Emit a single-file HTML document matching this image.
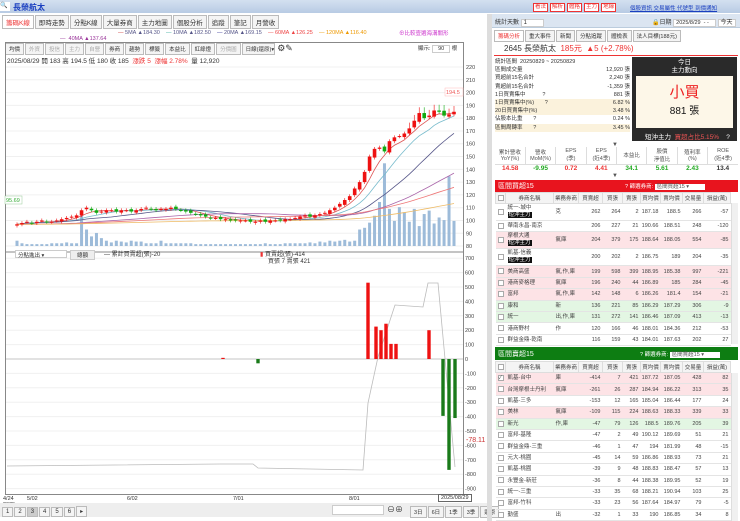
<!DOCTYPE html>
<html><head><meta charset="utf-8">
<style>
*{box-sizing:border-box;margin:0;padding:0}
body{width:740px;height:521px;overflow:hidden;background:#fff;font-family:"Liberation Sans","Noto Sans CJK TC",sans-serif;font-size:7px;color:#333;position:relative}
.a{position:absolute}
.hdr{left:0;top:0;width:740px;height:13px;background:linear-gradient(#d3e0f0,#b8cbe4)}
.tab{display:inline-block;border:1px solid #bbb;background:#f4f4f4;padding:1px 3px;margin-right:1px;font-size:6.5px}
.rb{display:inline-block;border:1px solid #e33;color:#e33;background:#fff;padding:0 1px;font-size:5.5px;line-height:7px;margin-right:2px}
table{border-collapse:collapse;table-layout:fixed}
.t td{height:11.4px;border-bottom:1px solid #e4e4e4;font-size:5.5px;text-align:right;padding-right:2px;color:#444;white-space:nowrap;overflow:hidden;line-height:6px}
.t td.n{text-align:left;padding-left:2px}
.t th{font-weight:normal;font-size:5.5px;background:#f4f4f4;border:1px solid #ddd;height:11px;color:#444;white-space:nowrap;overflow:hidden}
.cb{display:inline-block;width:6px;height:6px;border:1px solid #aaa;background:#fff;vertical-align:middle}
.pk td{background:#fde3e6}.gr td{background:#e3f6e3}
.blk{background:#111;color:#fff;padding:0 1px}
.red{color:#e33}.grn{color:#2a2}
</style></head><body>
<div class="a hdr"></div>
<div class="a" style="left:0;top:2px;width:10px;height:9px;background:#fff;font-size:6px">🔍</div>
<div class="a" style="left:13px;top:2px;color:#1a3fc0;font-weight:bold;font-size:8px">長榮航太</div>
<div class="a" style="left:533px;top:3px;white-space:nowrap"><span class="rb">看法</span><span class="rb">解析</span><span class="rb">體格</span><span class="rb">主力</span><span class="rb">地緣</span></div>
<div class="a" style="left:630px;top:4px;color:#1a3fc0;text-decoration:underline;font-size:5.5px;white-space:nowrap">個股資訊 交易屬性 代號型 到價通知</div>

<div class="a" style="left:2px;top:15px;white-space:nowrap"><span class="tab" style="color:#e33;background:#fff">籌碼K線</span><span class="tab">即時走勢</span><span class="tab">分點K線</span><span class="tab">大量券商</span><span class="tab">主力地圖</span><span class="tab">個股分析</span><span class="tab">追蹤</span><span class="tab">筆記</span><span class="tab">月營收</span></div>
<div class="a" style="left:118px;top:30px;font-size:5.5px;white-space:nowrap;color:#558"><span style="color:#c33">—</span> 5MA ▲184.30 &nbsp;&nbsp;&nbsp;<span style="color:#3a9">—</span> 10MA ▲182.50 &nbsp;&nbsp;&nbsp;<span style="color:#339">—</span> 20MA ▲169.15 &nbsp;&nbsp;&nbsp;<span style="color:#e44">— 60MA ▲126.25</span> &nbsp;&nbsp;&nbsp;<span style="color:#e90">— 120MA ▲116.40</span></div>
<div class="a" style="left:60px;top:36px;font-size:5.5px;color:#939">— &nbsp;40MA ▲137.64</div>
<div class="a" style="left:399px;top:29px;font-size:5.5px;color:#c3c">⊕比較壹選海溝關形</div>
<div class="a" style="left:5px;top:43px;white-space:nowrap;font-size:5.5px"><span class="tab" style="font-size:5.5px">均價</span><span class="tab" style="font-size:5.5px;color:#aaa">外資</span><span class="tab" style="font-size:5.5px;color:#aaa">投信</span><span class="tab" style="font-size:5.5px;color:#aaa">主力</span><span class="tab" style="font-size:5.5px;color:#aaa">自營</span><span class="tab" style="font-size:5.5px">券商</span><span class="tab" style="font-size:5.5px">趨勢</span><span class="tab" style="font-size:5.5px">標籤</span><span class="tab" style="font-size:5.5px">本益比</span><span class="tab" style="font-size:5.5px">紅綠燈</span><span class="tab" style="font-size:5.5px;color:#aaa">分價圖</span><span class="tab" style="font-size:5.5px;width:33px">日線(還原)▾</span> <span style="font-size:9px">⚙✎</span></div>
<div class="a" style="left:7px;top:55px;font-size:6.5px;white-space:nowrap">2025/08/29 開 183 高 194.5 低 180 收 185 &nbsp;<span class="red">漲跌 5 &nbsp;漲幅 2.78%</span> &nbsp;量 12,920</div>
<div class="a" style="left:418px;top:44px;font-size:5.5px">顯示: <span style="border:1px solid #ccc;padding:0 5px">90</span> 根</div>

<svg class="a" style="left:0;top:0" width="492" height="521" id="ch">
<rect x="5.5" y="42.5" width="458" height="452" fill="none" stroke="#888"/>
<line x1="5" y1="252" x2="463" y2="252" stroke="#888"/>
<g id="grid" stroke="#f0f0f0"></g>
<g id="lower"></g>
<g id="cand"></g>
</svg>
<div class="a" style="left:15px;top:250px;font-size:5.5px;border:1px solid #ccc;width:52px;height:8px;padding-left:2px;background:#fff">分點進出 ▾</div>
<div class="a" style="left:70px;top:250px;font-size:5.5px;border:1px solid #ccc;background:#eee;padding:0 6px">總額</div>
<div class="a" style="left:104px;top:249px;font-size:6px">— 累計買賣超(張)-20</div>
<div class="a" style="left:260px;top:249px;font-size:6px"><span style="color:#e33">▮</span> 買賣超(張)-414</div>
<div class="a" style="left:268px;top:256px;font-size:6px">買張 7 賣張 421</div>
<div class="a" style="left:3px;top:496px;font-size:5.5px;line-height:6px">4/24<br>2025</div>
<div class="a" style="left:27px;top:496px;font-size:5.5px">5/02</div>
<div class="a" style="left:127px;top:496px;font-size:5.5px">6/02</div>
<div class="a" style="left:233px;top:496px;font-size:5.5px">7/01</div>
<div class="a" style="left:349px;top:496px;font-size:5.5px">8/01</div>
<div class="a" style="left:438px;top:494px;font-size:5.5px;border:1px solid #666;padding:0 2px;background:#fff">2025/08/29</div>
<div class="a" style="left:0;top:503px;width:490px;height:14px;background:#eee"></div>
<div class="a" style="left:2px;top:506px;font-size:6px;white-space:nowrap"><span class="tab" style="font-size:6px">1</span><span class="tab" style="font-size:6px">2</span><span class="tab" style="font-size:6px;background:#ccc">3</span><span class="tab" style="font-size:6px">4</span><span class="tab" style="font-size:6px">5</span><span class="tab" style="font-size:6px">6</span><span class="tab" style="font-size:6px">▸</span></div>
<div class="a" style="left:332px;top:505px;width:52px;height:10px;border:1px solid #ccc;background:#fff"></div>
<div class="a" style="left:387px;top:504px;font-size:8px">⊖⊕</div>
<div class="a" style="left:410px;top:506px;font-size:5.5px;white-space:nowrap"><span class="tab" style="font-size:5.5px">3日</span><span class="tab" style="font-size:5.5px">6日</span><span class="tab" style="font-size:5.5px">1季</span><span class="tab" style="font-size:5.5px">3季</span><span class="tab" style="font-size:5.5px">還原</span></div>
<div class="a" style="left:487px;top:14px;width:5px;height:507px;background:#ddd"></div>

<!-- right panel -->
<div class="a" style="left:492px;top:14px;width:248px;height:14px;background:#dbe5f1;border-bottom:1px solid #bcd"></div>
<div class="a" style="left:495px;top:17px;font-size:6px;white-space:nowrap">統計天數 <span style="border:1px solid #ccc;background:#fff;padding:0 16px 0 2px">1</span></div>
<div class="a" style="left:652px;top:17px;font-size:6px;white-space:nowrap">🔒日期 <span style="border:1px solid #ccc;background:#fff;padding:0 6px 0 2px;font-size:5.5px">2025/8/29 &nbsp;- -</span> <span style="border:1px solid #ccc;background:#fff;padding:0 2px">今天</span></div>
<div class="a" style="left:494px;top:30px;white-space:nowrap"><span class="tab" style="color:#e33;background:#fff;font-size:5.5px">籌碼分析</span><span class="tab" style="font-size:5.5px">重大事件</span><span class="tab" style="font-size:5.5px">新聞</span><span class="tab" style="font-size:5.5px">分點追蹤</span><span class="tab" style="font-size:5.5px">體檢表</span><span class="tab" style="font-size:5.5px">法人目標(188元)</span></div>
<div class="a" style="left:494px;top:42px;width:244px;height:14px;border-bottom:1.5px solid #e33;font-size:8px;padding:1px 0 0 10px;white-space:nowrap">2645 長榮航太 &nbsp;<span class="red">185元 &nbsp;▲5 (+2.78%)</span></div>
<div class="a" style="left:495px;top:58px;width:135px;font-size:5.5px;line-height:8.2px;white-space:nowrap">
<div>統計區間 &nbsp;20250829 ~ 20250829</div>
<div style="display:flex;justify-content:space-between"><span>區間成交量</span><span>12,920 張</span></div>
<div style="display:flex;justify-content:space-between"><span>買超前15名合計</span><span>2,240 張</span></div>
<div style="display:flex;justify-content:space-between"><span>賣超前15名合計</span><span>-1,359 張</span></div>
<div style="display:flex;justify-content:space-between"><span>1日買賣集中 &nbsp;&nbsp;&nbsp;&nbsp;&nbsp;&nbsp;&nbsp;&nbsp;&nbsp;&nbsp;?</span><span>881 張</span></div>
<div style="display:flex;justify-content:space-between;background:#fbf2dc"><span>1日買賣集中(%) &nbsp;&nbsp;&nbsp;&nbsp;&nbsp;&nbsp;?</span><span>6.82 %</span></div>
<div style="display:flex;justify-content:space-between;background:#fbf2dc"><span>20日買賣集中(%)</span><span>3.48 %</span></div>
<div style="display:flex;justify-content:space-between"><span>佔股本比重 &nbsp;&nbsp;&nbsp;&nbsp;&nbsp;&nbsp;?</span><span>0.24 %</span></div>
<div style="display:flex;justify-content:space-between;background:#fbf2dc"><span>區間周轉率 &nbsp;&nbsp;&nbsp;&nbsp;&nbsp;&nbsp;?</span><span>3.45 %</span></div>
</div>
<div class="a" style="left:632px;top:57px;width:105px;height:84px;background:#2a2a2a"></div>
<div class="a" style="left:632px;top:59px;width:105px;text-align:center;color:#fff;font-size:6.5px;line-height:8px">今日<br>主力動向</div>
<div class="a" style="left:636px;top:76px;width:97px;height:52px;background:#fdf7e8;text-align:center"><div style="color:#e22;font-size:15px;margin-top:5px">小買</div><div style="font-size:10px;color:#111">881 張</div></div>
<div class="a" style="left:645px;top:131px;color:#fff;font-size:6.5px;white-space:nowrap">短沖主力 &nbsp;<span style="color:#e55">買超占比5.15%</span> &nbsp;&nbsp;&nbsp;?</div>
<div class="a" style="left:612px;top:142px;font-size:6px;color:#555">▼</div>
<table class="a" style="left:495px;top:147px;width:243px;font-size:5.5px;text-align:center">
<tr style="height:17px;color:#555"><td style="border-right:1px solid #ddd">累計營收<br>YoY(%)</td><td style="border-right:1px solid #ddd">營收<br>MoM(%)</td><td style="border-right:1px solid #ddd">EPS<br>(季)</td><td style="border-right:1px solid #ddd">EPS<br>(近4季)</td><td style="border-right:1px solid #ddd">本益比</td><td style="border-right:1px solid #ddd">股價<br>淨值比</td><td style="border-right:1px solid #ddd">殖利率<br>(%)</td><td>ROE<br>(近4季)</td></tr>
<tr style="font-size:6.5px;font-weight:bold;border-top:1px solid #ddd"><td class="red">14.58</td><td class="grn">-9.95</td><td class="red">0.72</td><td class="red">4.41</td><td class="grn">34.1</td><td class="grn">5.61</td><td class="grn">2.43</td><td>13.4</td></tr>
</table>
<div class="a" style="left:612px;top:173px;font-size:6px;color:#555">▼</div>

<div class="a" style="left:495px;top:180px;width:243px;height:12px;background:#e8141e;color:#fff;font-size:7px;padding:1px 3px;white-space:nowrap">區間買超15<span style="position:absolute;left:130px;font-size:5.5px;top:2px">? 篩選券商: <span style="background:#fff;color:#555;padding:0 16px 0 2px">區間買超15 ▾</span></span></div>
<table class="a t" style="left:495px;top:192px;width:235px">
<colgroup><col style="width:10px"><col style="width:48px"><col style="width:25px"><col style="width:24px"><col style="width:20px"><col style="width:18px"><col style="width:20px"><col style="width:22px"><col style="width:21px"><col style="width:27px"></colgroup>
<tr><th><span class="cb"></span></th><th>券商名稱</th><th>業務券商</th><th>買賣超</th><th>買張</th><th>賣張</th><th>買均價</th><th>賣均價</th><th>交易量</th><th>損益(萬)</th></tr>
<tr><td class="n" style="height:17px"><span class="cb"></span></td><td class="n" style="line-height:7px">統一-城中<br><span class="blk">短沖主力</span></td><td class="n red">克</td><td>262</td><td>264</td><td>2</td><td>187.18</td><td>188.5</td><td>266</td><td>-57</td></tr>
<tr><td class="n"><span class="cb"></span></td><td class="n">華南永昌-南京</td><td></td><td>206</td><td>227</td><td>21</td><td>190.66</td><td>188.51</td><td>248</td><td>-120</td></tr>
<tr class="pk"><td class="n" style="height:17px"><span class="cb"></span></td><td class="n" style="line-height:7px">摩根大通<br><span class="blk">短沖主力</span></td><td class="n red">氣庫</td><td>204</td><td>379</td><td>175</td><td>188.64</td><td>188.05</td><td>554</td><td>-85</td></tr>
<tr><td class="n" style="height:17px"><span class="cb"></span></td><td class="n" style="line-height:7px">凱基-信義<br><span class="blk">短沖主力</span></td><td></td><td>200</td><td>202</td><td>2</td><td>186.75</td><td>189</td><td>204</td><td>-35</td></tr>
<tr class="pk"><td class="n"><span class="cb"></span></td><td class="n">美商高盛</td><td class="n red">氣,作,庫</td><td>199</td><td>598</td><td>399</td><td>188.95</td><td>185.38</td><td>997</td><td>-221</td></tr>
<tr class="pk"><td class="n"><span class="cb"></span></td><td class="n">港商麥格理</td><td class="n red">氣庫</td><td>196</td><td>240</td><td>44</td><td>186.89</td><td>185</td><td>284</td><td>-45</td></tr>
<tr class="pk"><td class="n"><span class="cb"></span></td><td class="n">富邦</td><td class="n red">氣,作,庫</td><td>142</td><td>148</td><td>6</td><td>186.26</td><td>181.4</td><td>154</td><td>-21</td></tr>
<tr class="gr"><td class="n"><span class="cb"></span></td><td class="n">康和</td><td class="n grn">新</td><td>136</td><td>221</td><td>85</td><td>186.29</td><td>187.29</td><td>306</td><td>-9</td></tr>
<tr class="gr"><td class="n"><span class="cb"></span></td><td class="n">統一</td><td class="n grn">出,作,庫</td><td>131</td><td>272</td><td>141</td><td>186.46</td><td>187.09</td><td>413</td><td>-13</td></tr>
<tr><td class="n"><span class="cb"></span></td><td class="n">港商野村</td><td class="n">作</td><td>120</td><td>166</td><td>46</td><td>188.01</td><td>184.36</td><td>212</td><td>-53</td></tr>
<tr><td class="n"><span class="cb"></span></td><td class="n">群益金鼎-乾南</td><td></td><td>116</td><td>159</td><td>43</td><td>184.01</td><td>187.63</td><td>202</td><td>27</td></tr>
</table>
<div class="a" style="left:731px;top:203px;width:7px;height:141px;background:#f0f0f0;border-left:1px solid #ddd"></div>

<div class="a" style="left:495px;top:347px;width:243px;height:13px;background:#0d7d12;color:#fff;font-size:7px;padding:2px 3px;white-space:nowrap">區間賣超15<span style="position:absolute;left:145px;font-size:5.5px;top:3px">? 篩選券商: <span style="background:#fff;color:#555;padding:0 16px 0 2px">區間賣超15 ▾</span></span></div>
<table class="a t" style="left:495px;top:361px;width:235px">
<colgroup><col style="width:10px"><col style="width:48px"><col style="width:25px"><col style="width:24px"><col style="width:20px"><col style="width:18px"><col style="width:20px"><col style="width:22px"><col style="width:21px"><col style="width:27px"></colgroup>
<tr><th><span class="cb"></span></th><th>券商名稱</th><th>業務券商</th><th>買賣超</th><th>買張</th><th>賣張</th><th>買均價</th><th>賣均價</th><th>交易量</th><th>損益(萬)</th></tr>
<tr class="pk"><td class="n"><span class="cb" style="font-size:5px;line-height:4px">✓</span></td><td class="n">凱基-台中</td><td class="n red">庫</td><td>-414</td><td>7</td><td>421</td><td>187.72</td><td>187.05</td><td>428</td><td>82</td></tr>
<tr class="pk"><td class="n"><span class="cb"></span></td><td class="n">台灣摩根士丹利</td><td class="n red">氣庫</td><td>-261</td><td>26</td><td>287</td><td>184.94</td><td>186.22</td><td>313</td><td>35</td></tr>
<tr><td class="n"><span class="cb"></span></td><td class="n">凱基-三多</td><td></td><td>-153</td><td>12</td><td>165</td><td>185.04</td><td>186.44</td><td>177</td><td>24</td></tr>
<tr class="pk"><td class="n"><span class="cb"></span></td><td class="n">美林</td><td class="n red">氣庫</td><td>-109</td><td>115</td><td>224</td><td>188.63</td><td>188.33</td><td>339</td><td>33</td></tr>
<tr class="gr"><td class="n"><span class="cb"></span></td><td class="n">新光</td><td class="n grn">作,庫</td><td>-47</td><td>79</td><td>126</td><td>188.5</td><td>189.76</td><td>205</td><td>39</td></tr>
<tr><td class="n"><span class="cb"></span></td><td class="n">富邦-基隆</td><td></td><td>-47</td><td>2</td><td>49</td><td>190.12</td><td>189.69</td><td>51</td><td>21</td></tr>
<tr><td class="n"><span class="cb"></span></td><td class="n">群益金鼎-三重</td><td></td><td>-46</td><td>1</td><td>47</td><td>194</td><td>181.99</td><td>48</td><td>-15</td></tr>
<tr><td class="n"><span class="cb"></span></td><td class="n">元大-桃園</td><td></td><td>-45</td><td>14</td><td>59</td><td>186.86</td><td>188.93</td><td>73</td><td>21</td></tr>
<tr><td class="n"><span class="cb"></span></td><td class="n">凱基-桃園</td><td></td><td>-39</td><td>9</td><td>48</td><td>188.83</td><td>188.47</td><td>57</td><td>13</td></tr>
<tr><td class="n"><span class="cb"></span></td><td class="n">永豐金-新莊</td><td></td><td>-36</td><td>8</td><td>44</td><td>188.38</td><td>189.95</td><td>52</td><td>19</td></tr>
<tr><td class="n"><span class="cb"></span></td><td class="n">統一-三重</td><td></td><td>-33</td><td>35</td><td>68</td><td>188.21</td><td>190.94</td><td>103</td><td>25</td></tr>
<tr><td class="n"><span class="cb"></span></td><td class="n">富邦-竹科</td><td></td><td>-33</td><td>23</td><td>56</td><td>187.64</td><td>184.97</td><td>79</td><td>-5</td></tr>
<tr><td class="n"><span class="cb"></span></td><td class="n">勤盛</td><td class="n grn">出</td><td>-32</td><td>1</td><td>33</td><td>190</td><td>186.85</td><td>34</td><td>8</td></tr>
</table>
<div class="a" style="left:731px;top:373px;width:7px;height:148px;background:#f0f0f0;border-left:1px solid #ddd"></div>

<script>
(function(){
var ns="http://www.w3.org/2000/svg",svg=document.getElementById('ch');
function el(t,a,p){var e=document.createElementNS(ns,t);for(var k in a)e.setAttribute(k,a[k]);(p||svg).appendChild(e);return e;}
function tx(x,y,s,c,sz){var e=el('text',{x:x,y:y,'font-size':sz||5.5,fill:c||'#444','font-family':'Liberation Sans'});e.textContent=s;}
var g=document.getElementById('grid');
function py(p){return 67+(220-p)*1.279;}
for(var p=80;p<=220;p+=10){el('line',{x1:6,x2:463,y1:py(p),y2:py(p)},g);tx(466,py(p)+2,p);}
function ly(v){return 359-v*0.144;}
for(var v=700;v>=-900;v-=100){el('line',{x1:6,x2:463,y1:ly(v),y2:ly(v)},g);tx(465,ly(v)+2,v);}
var c=[97,98,99,98,99,100,99,99,100,101,102,103,104,108,110,108,106,107,108,108,107,108,108,107,108,109,110,109,108,109,109,110,109,108,107,106,105,104,103,102,102,101,101,100,100,100,100,99,99,100,99,100,100,100,101,101,102,103,104,103,104,105,106,108,110,113,116,119,125,130,138,150,156,157,154,162,165,166,168,172,178,184,180,182,186,185,182,183,185];
var n=c.length,dx=(454-17)/(n-1);
function X(i){return 17+i*dx;}
var vol=[5,2,1,1,1,1,1,2,2,2,3,2,2,36,18,10,14,8,5,3,5,4,3,5,4,4,2,2,2,5,2,2,2,2,2,2,1,1,1,1,1,1,1,1,1,1,1,1,1,1,2,1,1,1,2,2,2,2,2,3,2,4,3,5,4,5,6,4,5,18,20,26,34,50,95,42,28,44,38,27,42,22,36,40,25,32,29,80,28,20,15,22];
var ch=document.getElementById('cand');
for(var i=0;i<n;i++){var h=vol[i]*0.86+1;el('rect',{x:X(i)-1.5,y:246-h,width:3,height:h,fill:'#9dbbd9'},ch);}
function ma(k,col){var pts=[];for(var i=0;i<n;i++){var s=0,m=0;for(var j=Math.max(0,i-k+1);j<=i;j++){s+=c[j];m++;}var base=k>20?(c[0]*(k-m)+s)/k:s/m;pts.push(X(i)+','+py(base));}el('polyline',{points:pts.join(' '),fill:'none',stroke:col,'stroke-width':0.8},ch);}
ma(5,'#d55');ma(10,'#7bc');ma(20,'#558');ma(40,'#a6a');ma(60,'#e77');ma(120,'#eb6');
for(var i=0;i<n;i++){var o=i?c[i-1]+((i%3)-1)*0.8:96,cl=c[i],up=cl>=o,col=up?'#e11':'#1a1',t=Math.max(o,cl),b=Math.min(o,cl);
el('line',{x1:X(i),x2:X(i),y1:py(t+1.5+(i>78?3:0)),y2:py(b-1.5),stroke:col,'stroke-width':0.6},ch);
el('rect',{x:X(i)-1.8,y:py(t),width:3.6,height:Math.max(1,py(b)-py(t)),fill:col},ch);}
el('rect',{x:5,y:196,width:17,height:8,fill:'#fff',stroke:'#9c9','stroke-width':0.5});tx(6,202,'95.69','#3a3',5.5);
el('rect',{x:445,y:88,width:18,height:8,fill:'#fff',stroke:'#fbb','stroke-width':0.5});tx(446,94,'194.5','#e55',5.5);
var lw=document.getElementById('lower');
el('line',{x1:6,x2:463,y1:359,y2:359,stroke:'#999','stroke-width':0.6},lw);
el('polyline',{points:'7,466 220,464 253,464 258,468 363,470 368,403 378,357 395,305 423,307 428,283 438,283 455,467',fill:'none',stroke:'#bbb','stroke-width':0.8},lw);
var bars=[[368,530],[376,225],[381,200],[386,245],[391,105],[396,105],[429,200],[443,-395],[449,-770],[455,-410],[258,-30],[223,8]];
bars.forEach(function(b){var y=ly(Math.max(b[1],0)),h=Math.abs(b[1])*0.144;el('rect',{x:b[0]-1.7,y:y,width:3.4,height:h,fill:b[1]>0?'#e11':'#1a7a1a'},lw);});
tx(466,442,'-78.11','#c33',7);
})();
</script>
</body></html>
